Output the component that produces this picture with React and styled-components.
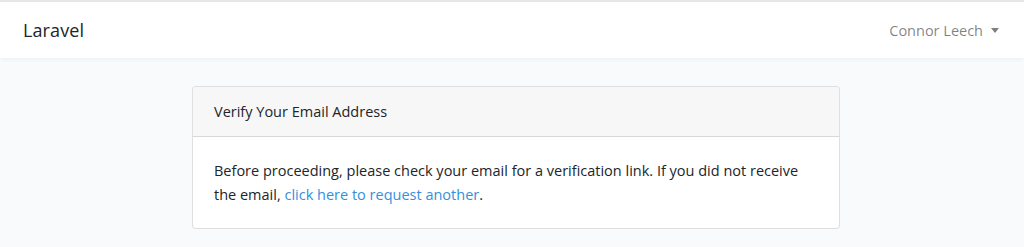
import React from "react"
import styled, { createGlobalStyle } from "styled-components"

const GlobalStyle = createGlobalStyle`
  html, body {
    margin: 0;
    padding: 0;
    background: #f8fafc;
    font-family: "Open Sans", "Noto Sans", sans-serif;
    color: #212529;
  }
`

const TopEdge = styled.div`
  height: 2px;
  background: #e6e6e6;
`

const Navbar = styled.nav`
  height: 56px;
  background: #fff;
  box-shadow: 0 2px 4px rgba(0, 0, 0, 0.04);
  display: flex;
  align-items: center;
  justify-content: space-between;
  padding: 0 23px;
`

const Brand = styled.a`
  font-size: 18px;
  color: #212529;
  text-decoration: none;
  letter-spacing: 0.1px;
`

const UserMenu = styled.a`
  display: flex;
  align-items: center;
  gap: 8px;
  font-size: 14.5px;
  color: rgba(0, 0, 0, 0.5);
  text-decoration: none;
  margin-right: 2px;
`

const Caret = styled.span`
  width: 0;
  height: 0;
  border-left: 4.5px solid transparent;
  border-right: 4.5px solid transparent;
  border-top: 5px solid rgba(0, 0, 0, 0.5);
  margin-top: 1px;
`

const Main = styled.main`
  display: flex;
  justify-content: center;
  padding: 28px 0 0 8px;
`

const Card = styled.div`
  width: 646px;
  background: #fff;
  border: 1px solid rgba(0, 0, 0, 0.125);
  border-radius: 4px;
  overflow: hidden;
`

const CardHeader = styled.div`
  height: 50px;
  box-sizing: border-box;
  padding: 0 21px;
  display: flex;
  align-items: center;
  background: #f7f7f7;
  border-bottom: 1px solid rgba(0, 0, 0, 0.125);
  font-size: 14.5px;
`

const CardBody = styled.div`
  padding: 22px 21px 21px;
  font-size: 14.5px;
  line-height: 24px;
`

const Link = styled.a`
  color: #3490dc;
  text-decoration: none;
`

const App = () => (
  <>
    <GlobalStyle />
    <TopEdge />
    <Navbar>
      <Brand href="#">Laravel</Brand>
      <UserMenu href="#">
        Connor Leech
        <Caret />
      </UserMenu>
    </Navbar>
    <Main>
      <Card>
        <CardHeader>Verify Your Email Address</CardHeader>
        <CardBody>
          Before proceeding, please check your email for a verification link.
          If you did not receive the email,{" "}
          <Link href="#">click here to request another</Link>.
        </CardBody>
      </Card>
    </Main>
  </>
)

export default App
